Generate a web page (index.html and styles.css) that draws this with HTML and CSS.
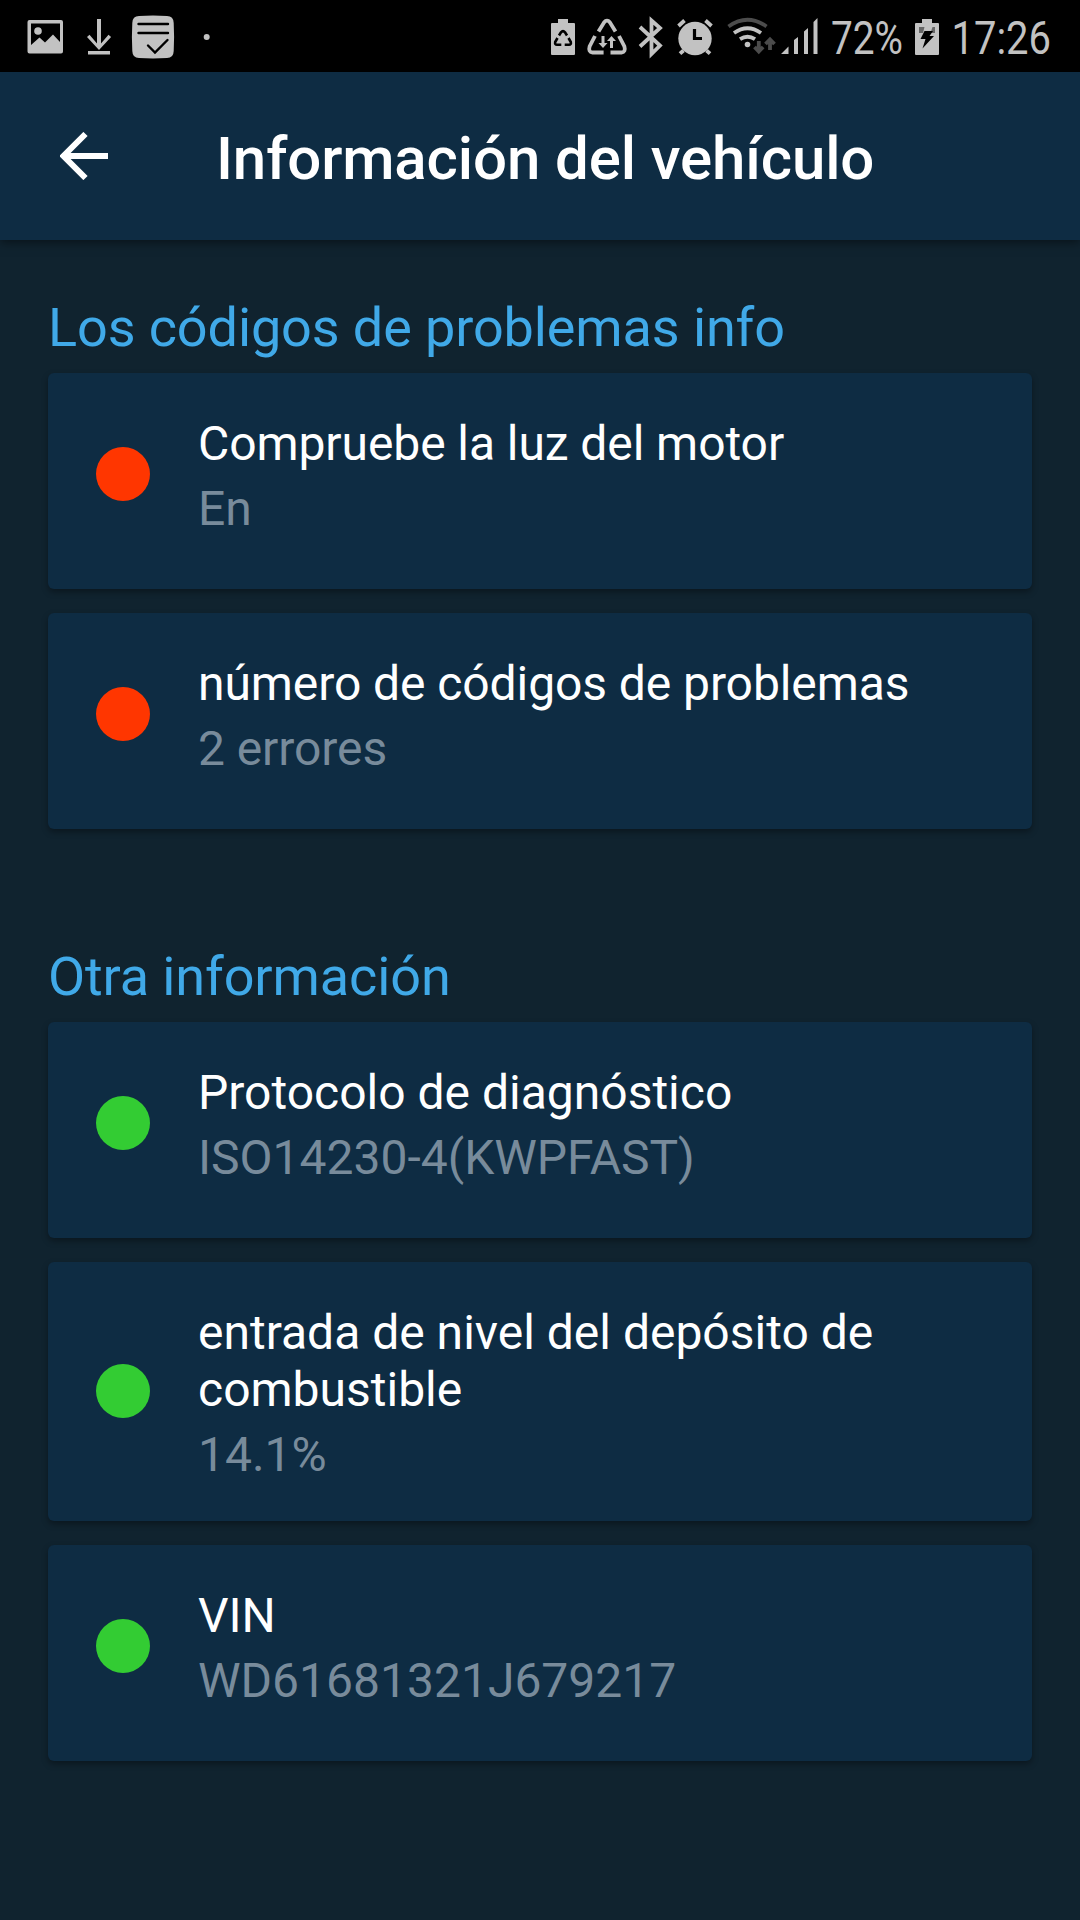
FILE: index.html
```html
<!DOCTYPE html>
<html lang="es">
<head>
<meta charset="utf-8">
<title>Información del vehículo</title>
<link rel="stylesheet" href="styles.css">
</head>
<body>
<div class="status-bar">
  <div class="status-group">
    <svg width="46" height="72" viewBox="23 0 46 72"><path fill-rule="evenodd" d="M29.500 20h31.500a2 2 0 0 1 2 2v29.500a2 2 0 0 1-2 2h-31.500a2 2 0 0 1-2-2V22a2 2 0 0 1 2-2zM31 23.500v21.500l8.500-7.500 5.500 5 8-8 7 7.500V23.500z"/><circle cx="38" cy="31" r="3.800"/></svg>
    <svg width="60" height="72" viewBox="69 0 60 72"><path d="M97 19h4v24.500l7.500-8.800 2.600 2.400L99 50 87 37.100l2.500-2.400 7.500 8.800zM88 51h22v3.500H88z"/></svg>
    <svg width="60" height="72" viewBox="129 0 60 72"><path d="M139 16q14-1 28 0 6.500 0 6.700 7 .8 14 0 28-.2 7-6.700 7-14 .8-28 0-6.500 0-6.700-7-.8-14 0-28 .2-7 6.700-7z"/><path class="cutout" d="M138.500 24H168M138.500 33H168M148 45.500l7 7 12.500-12.500"/></svg>
    <svg width="40" height="72" viewBox="189 0 40 72"><circle cx="206.700" cy="37" r="3"/></svg>
  </div>
  <div class="status-group">
    <svg width="36" height="72" viewBox="545 0 36 72"><path d="M558 19h10v4h6q1 0 1 1v30q0 1-1 1h-22q-1 0-1-1V24q0-1 1-1h6z"/><path class="recycle" d="M559 35.500l2-3.200q2-2.400 4 0l2 3.200M557.500 38l-2.300 4q-.6 2.800 1.800 2.800h4.300M568.500 38l2.300 4q.6 2.800-1.800 2.800h-4.300"/></svg>
    <svg width="44" height="72" viewBox="581 0 44 72"><path class="arc" d="M598.500 31.500l5.500-9q3-3.600 6 0l5.500 9M595 36l-5.400 10.500q-1.600 5.500 3 6h11M619 36l5.400 10.500q1.600 5.500-3 6H610.500"/><path d="M601.500 36h3v7h3l-4.500 5-4.500-5h3zM610 48h3v-7h3l-4.500-5-4.500 5h3z"/></svg>
    <svg width="44" height="72" viewBox="625 0 44 72"><path class="arc" d="M640 27l20 18.500-8.500 8.500V20.500l8.500 7.500L640 46.500"/></svg>
    <svg width="56" height="72" viewBox="669 0 56 72"><circle cx="695" cy="38.500" r="16.700"/><path class="arc" d="M678.500 26l6-5.500M705.500 20.500l6 5.500M683.500 50.500l-3.500 3.200M706.500 50.500l3.500 3.200"/><path class="cutout square" d="M694.500 29v9.500h7.500"/></svg>
    <svg width="54" height="72" viewBox="725 0 54 72"><path class="arc dim" d="M728.500 26.500q19-13.500 38 0"/><path class="arc" d="M734 33q13.500-9.500 27 0M740 39.200q7.500-5 15 0"/><circle cx="747.500" cy="44.500" r="2.800"/><path class="arc dim" d="M758.800 41v10M754.500 47l4.300 4.500 4.300-4.500M770 50V39.500M765.500 44l4.500-4.500 4.500 4.500"/></svg>
    <svg width="52" height="72" viewBox="779 0 52 72"><path d="M781 54l7.500-7.500V54zM794 54V40l4-3v17zM804 54V31.500l4-3.500v26zM813.500 54V22l4-4v36z"/></svg>
    <svg class="status-text" width="81" height="72" viewBox="831 0 81 72"><text x="831" y="54" textLength="72" lengthAdjust="spacingAndGlyphs">72%</text></svg>
    <svg width="38" height="72" viewBox="912 0 38 72"><path d="M922 19h10v4h6q1 0 1 1v30q0 1-1 1h-22q-1 0-1-1V24q0-1 1-1h6z"/><path class="charge" d="M919 27h16v6h-16z"/><path d="M924.500 27h8l-2 6h-7.500z"/><path class="bolt" d="M924.500 31h8.500l-3.500 5h4.500l-11.500 12.500 3-9.500h-5z"/></svg>
    <svg class="status-text" width="110" height="72" viewBox="950 0 110 72"><text x="951.500" y="54" textLength="99.500" lengthAdjust="spacingAndGlyphs">17:26</text></svg>
  </div>
</div>

<header class="app-bar">
  <svg class="back" width="48" height="48" viewBox="0 0 48 48"><path d="M48 24H4M25.500 2L3.500 24l22 22"/></svg>
  <h1 class="title">Información del vehículo</h1>
</header>

<main class="content">
  <section class="section section-codes">
    <h2 class="section-title">Los códigos de problemas info</h2>
    <div class="cards">
      <article class="card"><div class="row"><span class="dot dot-alert"></span><div class="info"><p class="label">Compruebe la luz del motor</p><p class="value">En</p></div></div></article>
      <article class="card"><div class="row"><span class="dot dot-alert"></span><div class="info"><p class="label">número de códigos de problemas</p><p class="value">2 errores</p></div></div></article>
    </div>
  </section>
  <section class="section">
    <h2 class="section-title">Otra información</h2>
    <div class="cards">
      <article class="card"><div class="row"><span class="dot dot-ok"></span><div class="info"><p class="label">Protocolo de diagnóstico</p><p class="value">ISO14230-4(KWPFAST)</p></div></div></article>
      <article class="card"><div class="row"><span class="dot dot-ok"></span><div class="info"><p class="label">entrada de nivel del depósito de combustible</p><p class="value">14.1%</p></div></div></article>
      <article class="card"><div class="row"><span class="dot dot-ok"></span><div class="info"><p class="label">VIN</p><p class="value">WD61681321J679217</p></div></div></article>
    </div>
  </section>
</main>
</body>
</html>
```
FILE: styles.css
```css
* {
  box-sizing: border-box;
  margin: 0;
}

body {
  width: 1080px;
  min-height: 1920px;
  background: #10232f;
  color: #fff;
  font-family: Roboto, "Liberation Sans", sans-serif;
}

.status-bar {
  display: flex;
  justify-content: space-between;
  height: 72px;
  padding: 0 20px 0 23px;
  background: #000;
}

.status-group {
  display: flex;
}

.status-group svg {
  display: block;
  overflow: visible;
  fill: #c2c2c2;
}

.status-group .cutout {
  fill: none;
  stroke: #000;
  stroke-width: 2.4;
  stroke-linecap: round;
}

.status-group .square {
  stroke-width: 3.2;
  stroke-linecap: butt;
}

.status-group .recycle {
  fill: none;
  stroke: #000;
  stroke-width: 2.6;
}

.status-group .arc {
  fill: none;
  stroke: #c2c2c2;
  stroke-width: 3.8;
}

.status-group .dim {
  stroke: #4c4c4c;
}

.status-group .charge {
  fill: #666;
}

.status-group .bolt {
  fill: #000;
}

.status-text {
  font-size: 45.5px;
}

.app-bar {
  display: flex;
  align-items: center;
  gap: 108px;
  height: 168px;
  padding: 0 60px;
  background: #0e2c43;
  box-shadow: 0 2px 10px rgba(0, 0, 0, 0.5);
}

.back {
  fill: none;
  stroke: #fff;
  stroke-width: 6;
}

.title {
  padding-top: 5px;
  font-size: 60px;
  font-weight: 500;
  letter-spacing: -0.12px;
  line-height: 70px;
}

.content {
  padding: 56px 48px 0;
}

.section + .section {
  margin-top: 116px;
}

.section-title {
  padding-bottom: 13px;
  color: #40a9e8;
  font-size: 54px;
  font-weight: 400;
  letter-spacing: -0.11px;
  line-height: 64px;
}

.cards {
  display: flex;
  flex-direction: column;
  gap: 24px;
}

.card {
  min-height: 216px;
  border-radius: 6px;
  background: #0e2c43;
  box-shadow: 0 3px 6px rgba(0, 0, 0, 0.35);
}

.row {
  display: flex;
  align-items: center;
  gap: 48px;
  padding: 0 48px;
}

.dot {
  flex: none;
  width: 54px;
  height: 54px;
  margin-bottom: 1px;
  border-radius: 50%;
}

.dot-alert {
  background: #ff3600;
}

.dot-ok {
  background: #33cc33;
}

.info {
  padding: 42px 0 38px;
  font-size: 48px;
  line-height: 57px;
}

.section-codes .info {
  letter-spacing: -0.08px;
}

.value {
  margin-top: 8px;
  color: #788b9b;
}
```
